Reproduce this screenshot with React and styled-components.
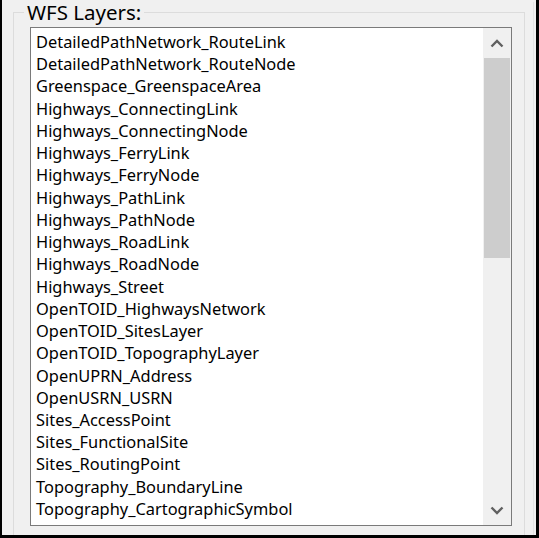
import React from "react";
import styled, { createGlobalStyle } from "styled-components";

const GlobalStyle = createGlobalStyle`
  html, body {
    margin: 0;
    padding: 0;
    background: #f0f0f0;
  }
  * {
    box-sizing: border-box;
  }
`;

const layers = [
  "DetailedPathNetwork_RouteLink",
  "DetailedPathNetwork_RouteNode",
  "Greenspace_GreenspaceArea",
  "Highways_ConnectingLink",
  "Highways_ConnectingNode",
  "Highways_FerryLink",
  "Highways_FerryNode",
  "Highways_PathLink",
  "Highways_PathNode",
  "Highways_RoadLink",
  "Highways_RoadNode",
  "Highways_Street",
  "OpenTOID_HighwaysNetwork",
  "OpenTOID_SitesLayer",
  "OpenTOID_TopographyLayer",
  "OpenUPRN_Address",
  "OpenUSRN_USRN",
  "Sites_AccessPoint",
  "Sites_FunctionalSite",
  "Sites_RoutingPoint",
  "Topography_BoundaryLine",
  "Topography_CartographicSymbol",
  "Topography_CartographicText",
  "Topography_TopographicArea",
  "Topography_TopographicLine",
  "Topography_TopographicPoint",
];

const Frame = styled.div`
  width: 539px;
  height: 538px;
  overflow: hidden;
  border-left: 2px solid #000;
  border-right: 3px solid #000;
  border-bottom: 3px solid #000;
  padding-left: 11px;
  font-family: "Noto Sans", "DejaVu Sans", sans-serif;
  font-size: 16.4px;
  color: #000;
`;

const Panel = styled.div`
  height: 100%;
  width: 521px;
  border-right: 1px solid #e3e3e3;
`;

const GroupBox = styled.fieldset`
  margin: 2px 0 0;
  width: 512px;
  height: 560px;
  padding: 0 12px 0 16px;
  border: 1px solid #dcdcdc;
`;

const Legend = styled.legend`
  margin-left: -6px;
  padding: 0 3px;
  font-size: 20.5px;
  line-height: 20px;
  height: 20px;
  color: #000;
`;

const ListBox = styled.div`
  margin-top: 5px;
  width: 482px;
  height: 499px;
  border: 1px solid #7a7a7a;
  background: #fff;
  display: flex;
`;

const Items = styled.ul`
  flex: 1;
  margin: 0;
  padding: 3px 0 0 5px;
  list-style: none;
  overflow: hidden;
`;

const Item = styled.li`
  height: 22.24px;
  line-height: 22.24px;
  white-space: nowrap;
`;

const ScrollBar = styled.div`
  width: 28px;
  background: #f0f0f0;
  display: flex;
  flex-direction: column;
`;

const ArrowButton = styled.div`
  height: 30px;
  display: flex;
  align-items: center;
  justify-content: center;
`;

const Track = styled.div`
  flex: 1;
  padding: 0 1px;
`;

const Thumb = styled.div`
  height: 200px;
  background: #cdcdcd;
`;

const Chevron = ({ down }) => (
  <svg width="14" height="9" viewBox="0 0 14 9">
    <path
      d={down ? "M1.5 1.5 L7 7 L12.5 1.5" : "M1.5 7.5 L7 2 L12.5 7.5"}
      fill="none"
      stroke="#606060"
      strokeWidth="2.4"
    />
  </svg>
);

export default function App() {
  return (
    <>
      <GlobalStyle />
      <Frame>
        <Panel>
          <GroupBox>
            <Legend>WFS Layers:</Legend>
            <ListBox>
              <Items>
                {layers.map((name) => (
                  <Item key={name}>{name}</Item>
                ))}
              </Items>
              <ScrollBar>
                <ArrowButton>
                  <Chevron />
                </ArrowButton>
                <Track>
                  <Thumb />
                </Track>
                <ArrowButton>
                  <Chevron down />
                </ArrowButton>
              </ScrollBar>
            </ListBox>
          </GroupBox>
        </Panel>
      </Frame>
    </>
  );
}
